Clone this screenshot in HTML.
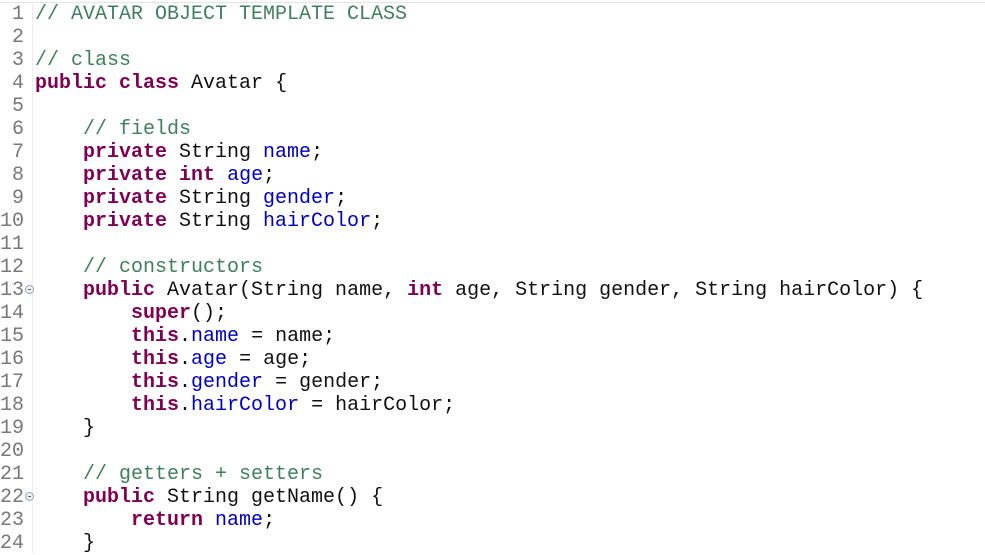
<!DOCTYPE html>
<html><head><style>
body{margin:0;width:985px;height:551px;overflow:hidden;background:#fff;font-family:"Liberation Mono","Courier New",monospace;font-size:20px;}
.top{position:absolute;left:0;top:0;width:985px;height:2px;background:#fff;border-bottom:1px solid #e4e4e4;}
.gut{position:absolute;left:32px;top:2px;width:1px;height:551px;background:#ececec;}
.ln{position:absolute;left:0;top:3px;color:#787878;line-height:23px;white-space:pre;}
.code{position:absolute;left:35px;top:3px;line-height:23px;white-space:pre;color:#111;}
.c{color:#3F7F5F}.k{color:#7F0055;font-weight:bold}.f{color:#0000C0}
.fold{position:absolute;left:25px;width:7px;height:7px;border:1px solid #9aa3ad;border-radius:50%;background:#eef1f4;}
.fold:after{content:"";position:absolute;left:2px;top:3px;width:3px;height:1px;background:#5a6570;}
</style></head><body>
<div class="top"></div><div class="gut"></div>
<div class="ln"> 1
 2
 3
 4
 5
 6
 7
 8
 9
10
11
12
13
14
15
16
17
18
19
20
21
22
23
24</div>
<div class="fold" style="top:285px"></div>
<div class="fold" style="top:492px"></div>
<div class="code"><span class="c">// AVATAR OBJECT TEMPLATE CLASS</span>

<span class="c">// class</span>
<span class="k">public</span> <span class="k">class</span> Avatar {

    <span class="c">// fields</span>
    <span class="k">private</span> String <span class="f">name</span>;
    <span class="k">private</span> <span class="k">int</span> <span class="f">age</span>;
    <span class="k">private</span> String <span class="f">gender</span>;
    <span class="k">private</span> String <span class="f">hairColor</span>;

    <span class="c">// constructors</span>
    <span class="k">public</span> Avatar(String name, <span class="k">int</span> age, String gender, String hairColor) {
        <span class="k">super</span>();
        <span class="k">this</span>.<span class="f">name</span> = name;
        <span class="k">this</span>.<span class="f">age</span> = age;
        <span class="k">this</span>.<span class="f">gender</span> = gender;
        <span class="k">this</span>.<span class="f">hairColor</span> = hairColor;
    }

    <span class="c">// getters + setters</span>
    <span class="k">public</span> String getName() {
        <span class="k">return</span> <span class="f">name</span>;
    }</div>
</body></html>
